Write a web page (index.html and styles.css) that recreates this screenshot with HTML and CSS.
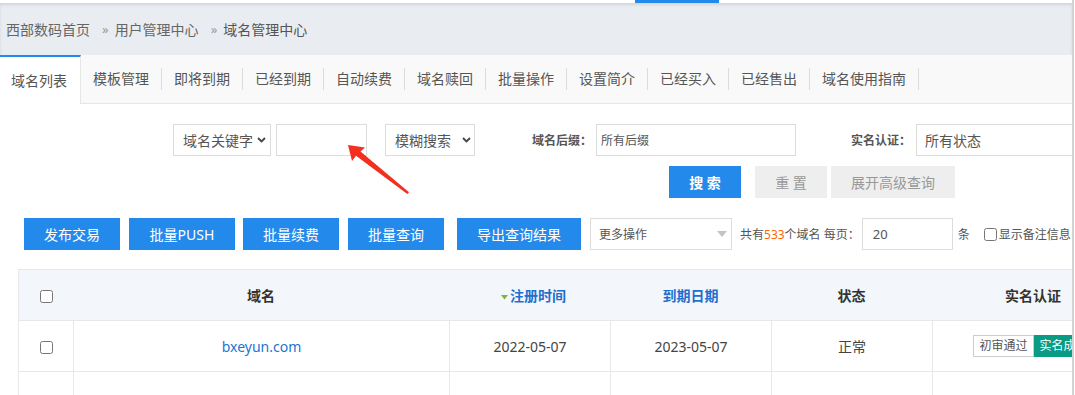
FILE: index.html
```html
<!DOCTYPE html>
<html lang="zh-CN">
<head>
<meta charset="utf-8">
<title>域名管理中心</title>
<link rel="stylesheet" href="styles.css">
</head>
<body>
<div class="page">
  <div class="topstrip"><span class="topstrip-active"></span></div>

  <div class="crumbs">
    <a class="crumb">西部数码首页</a><span class="sep">»</span><a class="crumb">用户管理中心</a><span class="sep">»</span><span class="crumb current">域名管理中心</span>
  </div>

  <ul class="tabs">
    <li class="tab active">域名列表</li>
    <li class="tab">模板管理</li>
    <li class="tab">即将到期</li>
    <li class="tab">已经到期</li>
    <li class="tab">自动续费</li>
    <li class="tab">域名赎回</li>
    <li class="tab">批量操作</li>
    <li class="tab">设置简介</li>
    <li class="tab">已经买入</li>
    <li class="tab">已经售出</li>
    <li class="tab">域名使用指南</li>
  </ul>

  <div class="search">
    <div class="search-row">
      <div class="select sel-key"><span>域名关键字</span><svg class="chev" width="9" height="6" viewBox="0 0 9 6"><path d="M1 1 L4.5 4.5 L8 1" fill="none" stroke="#444" stroke-width="1.8"/></svg></div>
      <div class="input kw"></div>
      <div class="select sel-mode"><span>模糊搜索</span><svg class="chev" width="9" height="6" viewBox="0 0 9 6"><path d="M1 1 L4.5 4.5 L8 1" fill="none" stroke="#444" stroke-width="1.8"/></svg></div>
      <span class="flabel l-suffix">域名后缀：</span>
      <div class="input suffix">所有后缀</div>
      <span class="flabel l-real">实名认证：</span>
      <div class="input real">所有状态</div>
    </div>
    <div class="search-row2">
      <button class="btn btn-primary btn-search">搜 索</button>
      <button class="btn btn-gray btn-reset">重 置</button>
      <button class="btn btn-gray btn-adv">展开高级查询</button>
    </div>
    <svg class="arrow" width="75" height="60" viewBox="340 140 75 60"><polygon points="348,145 365,147.5 360.5,151.5 409,192.3 407.3,194 356,155.8 352,161" fill="#f3301f"/></svg>
  </div>

  <div class="toolbar">
    <button class="btn btn-primary tb w96">发布交易</button>
    <button class="btn btn-primary tb w106 g9">批量PUSH</button>
    <button class="btn btn-primary tb w96 g8">批量续费</button>
    <button class="btn btn-primary tb w96 g9">批量查询</button>
    <button class="btn btn-primary tb w124 g13">导出查询结果</button>
    <div class="select more"><span>更多操作</span><svg width="10" height="6" viewBox="0 0 10 6"><polygon points="0,0 10,0 5,6" fill="#c4c4c4"/></svg></div>
    <span class="count">共有<em>533</em>个域名 每页：</span>
    <div class="input perpage">20</div>
    <span class="unit">条</span>
    <label class="remark"><input type="checkbox">显示备注信息</label>
  </div>

  <table class="grid">
    <thead>
      <tr>
        <th class="c-chk"><input type="checkbox"></th>
        <th class="c-name">域名</th>
        <th class="c-date th-sort"><svg class="sort" width="7" height="5" viewBox="0 0 7 5"><polygon points="0,0 7,0 3.5,4.5" fill="#7cb342"/></svg>注册时间</th>
        <th class="c-date th-blue">到期日期</th>
        <th class="c-date">状态</th>
        <th class="c-real">实名认证</th>
      </tr>
    </thead>
    <tbody>
      <tr>
        <td><input type="checkbox"></td>
        <td><a class="domain">bxeyun.com</a></td>
        <td>2022-05-07</td>
        <td>2023-05-07</td>
        <td>正常</td>
        <td><span class="badge badge-pre">初审通过</span><span class="badge badge-ok">实名成功</span></td>
      </tr>
      <tr>
        <td>&nbsp;</td><td></td><td></td><td></td><td></td><td></td>
      </tr>
    </tbody>
  </table>
</div>
</body>
</html>
```

FILE: styles.css
```css
html, body {
  margin: 0;
  padding: 0;
  background: #fff;
}

body {
  font-family: "Noto Sans", "Noto Sans CJK SC", sans-serif;
  color: #555;
}

.page {
  width: 1072px;
  height: 395px;
  border-right: 2px solid #d3d3d3;
  overflow: hidden;
}

/* top strip */
.topstrip {
  height: 3px;
  background: #fff;
  display: flex;
}
.topstrip-active {
  margin-left: 635px;
  width: 84px;
  background: #2389eb;
}

/* breadcrumbs */
.crumbs {
  height: 52px;
  background: #e9ecf1;
  box-shadow: inset 0 2px 3px rgba(0, 0, 0, 0.1);
  display: flex;
  align-items: center;
  padding-left: 6px;
  font-size: 14px;
  color: #666;
  white-space: nowrap;
}
.crumb.current {
  color: #555;
}
.sep {
  margin: 0 6px 0 12px;
  color: #999;
  font-size: 13px;
}

/* tabs */
.tabs {
  list-style: none;
  margin: 0;
  padding: 0;
  height: 48px;
  background: #f9f9f9;
  border-bottom: 1px solid #e6e6e6;
  display: flex;
  align-items: center;
  font-size: 14px;
  color: #555;
  white-space: nowrap;
}
.tab {
  padding: 0 12px;
  line-height: 22px;
  border-right: 1px solid #dcdcdc;
}
.tab.active {
  align-self: stretch;
  margin-bottom: -1px;
  background: #fff;
  border-top: 2px solid #2389eb;
  border-right: 1px solid #e6e6e6;
  padding: 0 13px 0 11px;
  display: flex;
  align-items: center;
}

/* search form */
.search {
  position: relative;
  padding-top: 20px;
}
.search-row {
  display: flex;
  align-items: center;
  height: 32px;
  padding-left: 173px;
  white-space: nowrap;
}
.select {
  box-sizing: border-box;
  height: 32px;
  border: 1px solid #dcdcdc;
  background: #fff;
  display: flex;
  align-items: center;
  justify-content: space-between;
  font-size: 14px;
  color: #555;
  flex-shrink: 0;
}
.chev {
  display: block;
}
.sel-key {
  width: 98px;
  padding: 0 4px 0 9px;
}
.sel-mode {
  width: 90px;
  margin-left: 18px;
  padding: 0 3px 0 9px;
}
.input {
  box-sizing: border-box;
  height: 32px;
  border: 1px solid #dcdcdc;
  background: #fff;
  flex-shrink: 0;
  display: flex;
  align-items: center;
  color: #555;
}
.kw {
  width: 91px;
  margin-left: 5px;
}
.flabel {
  font-size: 12px;
  font-weight: bold;
  color: #555;
  flex-shrink: 0;
}
.l-suffix {
  margin-left: 57px;
  width: 64px;
}
.suffix {
  width: 200px;
  font-size: 12px;
  padding-left: 4px;
}
.l-real {
  margin-left: 55px;
  width: 65px;
}
.real {
  width: 200px;
  font-size: 14px;
  padding-left: 8px;
}

.search-row2 {
  display: flex;
  margin-top: 10px;
  padding-left: 669px;
}
.btn {
  box-sizing: border-box;
  height: 32px;
  border: 0;
  padding: 0;
  margin: 0;
  font-family: inherit;
  font-size: 14px;
  flex-shrink: 0;
  white-space: nowrap;
}
.btn-primary {
  background: #2389eb;
  color: #fff;
}
.btn-gray {
  background: #eeeeee;
  color: #999;
}
.btn-search {
  width: 72px;
  font-weight: bold;
}
.btn-reset {
  width: 72px;
  margin-left: 14px;
}
.btn-adv {
  width: 124px;
  margin-left: 4px;
}

.arrow {
  position: absolute;
  left: 340px;
  top: 36px;
}

/* toolbar */
.toolbar {
  display: flex;
  align-items: center;
  height: 32px;
  margin-top: 20px;
  padding-left: 24px;
  font-size: 12px;
  color: #555;
  white-space: nowrap;
}
.w96 { width: 96px; }
.w106 { width: 106px; }
.w124 { width: 124px; }
.g8 { margin-left: 8px; }
.g9 { margin-left: 9px; }
.g13 { margin-left: 13px; }

.more {
  width: 142px;
  margin-left: 9px;
  padding: 0 4px 0 8px;
  font-size: 12px;
}
.count {
  margin-left: 8px;
  flex-shrink: 0;
}
.count em {
  font-style: normal;
  color: #f60;
}
.perpage {
  width: 91px;
  margin-left: 2px;
  padding-left: 10px;
  font-size: 13px;
}
.unit {
  margin-left: 5px;
  flex-shrink: 0;
}
.remark {
  margin-left: 14px;
  display: flex;
  align-items: center;
  flex-shrink: 0;
}
.remark input {
  margin: 0 2px 0 0;
  width: 13px;
  height: 13px;
}

/* table */
.grid {
  margin: 19px 0 0 18px;
  border-collapse: separate;
  border-spacing: 0;
  table-layout: fixed;
  width: 1116px;
  border-left: 1px solid #e8e8e8;
  font-size: 14px;
  color: #444;
}
.grid th,
.grid td {
  box-sizing: border-box;
  padding: 0;
  text-align: center;
  vertical-align: middle;
  white-space: nowrap;
}
.grid th {
  height: 52px;
  background: #f3f6fa;
  border-top: 1px solid #e8e8e8;
  border-bottom: 1px solid #e8e8e8;
  font-weight: bold;
  color: #333;
}
.grid td {
  height: 51px;
  border-bottom: 1px solid #e8e8e8;
}
.grid td + td {
  border-left: 1px solid #e8e8e8;
}
.grid input[type="checkbox"] {
  margin: 0;
  width: 13px;
  height: 13px;
  vertical-align: middle;
}
.c-chk { width: 54px; }
.c-name { width: 376px; }
.c-date { width: 161px; }
.c-real { width: 202px; }

.th-sort {
  color: #1f6fcf !important;
  padding-left: 8px !important;
}
.th-blue {
  color: #1f6fcf !important;
}
.sort {
  margin-right: 2px;
  vertical-align: middle;
}
.domain {
  color: #2276cf;
}

.badge {
  display: inline-block;
  box-sizing: border-box;
  height: 22px;
  line-height: 20px;
  padding: 0 5px;
  font-size: 12px;
  vertical-align: middle;
}
.badge-pre {
  border: 1px solid #cccccc;
  background: #fff;
  color: #555;
}
.badge-ok {
  border: 1px solid #0a9b84;
  background: #0a9b84;
  color: #fff;
}
```
